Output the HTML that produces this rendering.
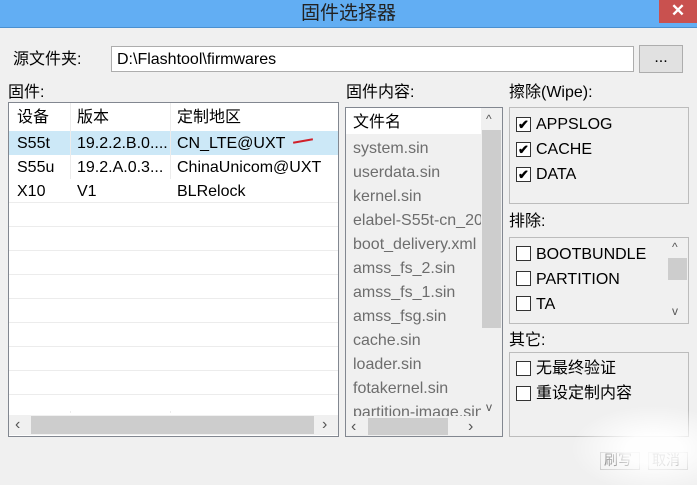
<!DOCTYPE html><html><head><meta charset="utf-8"><style>
*{box-sizing:border-box;margin:0;padding:0}
body{width:697px;height:476px;background:#f0f0f0;font-family:"Liberation Sans","Noto Sans CJK SC",sans-serif;font-size:16px;line-height:19px;color:#000;position:relative;overflow:hidden}
.a{position:absolute}
.title{left:0;top:0;width:697px;height:28px;background:#62aef3;border-bottom:1px solid #4a90d0}
.title span{position:absolute;left:0;width:697px;text-align:center;top:3px;font-size:19px;line-height:22px;color:#222}
.close{left:659px;top:0;width:38px;height:23px;background:#c9514f;color:#fff;text-align:center;font-size:17px;line-height:22px;font-weight:bold}
.box{border:1px solid #adadad;background:#fff}
.cell{position:absolute;white-space:nowrap}
.gray{color:#6d6d6d}
.cb{position:absolute;width:15px;height:15px;border:1px solid #333;background:#fff;font-size:13px;line-height:13px;text-align:center;font-weight:bold}
.sb{background:#cdcdcd}
</style></head><body>
<div class="a title"><span>固件选择器</span></div>
<div class="a close">✕</div>
<div class="a" style="left:13px;top:50px">源文件夹:</div>
<div class="a box" style="left:111px;top:46px;width:523px;height:26px;padding:3px 5px">D:\Flashtool\firmwares</div>
<div class="a" style="left:639px;top:45px;width:44px;height:28px;border:1px solid #adadad;background:#e1e1e1;text-align:center;line-height:24px">...</div>

<div class="a" style="left:8px;top:83px">固件:</div>
<div class="a box" style="left:8px;top:102px;width:331px;height:335px;border-color:#828790">
 <div class="a" style="left:0;top:28px;width:329px;height:24px;background:#cce8f7"></div>
 <div class="a" style="left:61px;top:0;width:1px;height:310px;background:#ececec"></div>
 <div class="a" style="left:161px;top:0;width:1px;height:310px;background:#ececec"></div>
 <div class="a" style="left:0;top:76px;width:329px;height:232px;background:repeating-linear-gradient(#fff 0 23px,#ececec 23px 24px)"></div>
 <div class="cell" style="left:8px;top:5px">设备</div><div class="cell" style="left:68px;top:5px">版本</div><div class="cell" style="left:168px;top:5px">定制地区</div>
 <div class="cell" style="left:8px;top:31px">S55t</div><div class="cell" style="left:68px;top:31px">19.2.2.B.0....</div><div class="cell" style="left:168px;top:31px">CN_LTE@UXT</div>
 <div class="a" style="left:284px;top:37px;width:20px;height:2px;background:#d0202a;transform:rotate(-10deg)"></div>
 <div class="cell" style="left:8px;top:55px">S55u</div><div class="cell" style="left:68px;top:55px">19.2.A.0.3...</div><div class="cell" style="left:168px;top:55px">ChinaUnicom@UXT</div>
 <div class="cell" style="left:8px;top:79px">X10</div><div class="cell" style="left:68px;top:79px">V1</div><div class="cell" style="left:168px;top:79px">BLRelock</div>
 <div class="a" style="left:0;top:312px;width:329px;height:20px;background:#f0f0f0"></div>
 <div class="a sb" style="left:22px;top:313px;width:283px;height:18px"></div>
 <div class="cell" style="left:6px;top:312px;color:#555">‹</div><div class="cell" style="left:313px;top:312px;color:#555">›</div>
</div>

<div class="a" style="left:346px;top:83px">固件内容:</div>
<div class="a" style="left:345px;top:107px;width:158px;height:330px;border:1px solid #828790;background:#f0f0f0;overflow:hidden">
 <div class="a" style="left:0;top:0;width:135px;height:26px;background:#fff"></div>
 <div class="cell" style="left:7px;top:5px">文件名</div>
 <div class="a gray" style="left:7px;top:29px;line-height:24px;white-space:nowrap;width:128px;overflow:hidden">system.sin<br>userdata.sin<br>kernel.sin<br>elabel-S55t-cn_20<br>boot_delivery.xml<br>amss_fs_2.sin<br>amss_fs_1.sin<br>amss_fsg.sin<br>cache.sin<br>loader.sin<br>fotakernel.sin<br>partition-image.sin</div>
 <div class="a" style="left:135px;top:0;width:21px;height:308px;background:#f0f0f0"></div>
 <div class="a sb" style="left:136px;top:22px;width:19px;height:198px"></div>
 <div class="cell" style="left:140px;top:2px;font-size:12px;color:#555">^</div>
 <div class="cell" style="left:140px;top:290px;font-size:12px;color:#555">v</div>
 <div class="a" style="left:0;top:308px;width:156px;height:20px;background:#f0f0f0"></div>
 <div class="a sb" style="left:22px;top:310px;width:80px;height:17px"></div>
 <div class="cell" style="left:5px;top:309px;color:#555">‹</div><div class="cell" style="left:122px;top:309px;color:#555">›</div>
</div>

<div class="a" style="left:509px;top:83px">擦除(Wipe):</div>
<div class="a" style="left:509px;top:107px;width:180px;height:97px;border:1px solid #bcbcbc"></div>
<div class="cb" style="left:516px;top:117px">✔</div><div class="cell" style="left:536px;top:115px">APPSLOG</div>
<div class="cb" style="left:516px;top:142px">✔</div><div class="cell" style="left:536px;top:140px">CACHE</div>
<div class="cb" style="left:516px;top:167px">✔</div><div class="cell" style="left:536px;top:165px">DATA</div>

<div class="a" style="left:509px;top:212px">排除:</div>
<div class="a" style="left:509px;top:237px;width:180px;height:87px;border:1px solid #bcbcbc;overflow:hidden">
 <div class="a sb" style="left:158px;top:20px;width:19px;height:22px"></div>
 <div class="cell" style="left:162px;top:0px;font-size:12px;color:#555">^</div>
 <div class="cell" style="left:162px;top:64px;font-size:12px;color:#555">v</div>
</div>
<div class="cb" style="left:516px;top:246px"></div><div class="cell" style="left:536px;top:245px">BOOTBUNDLE</div>
<div class="cb" style="left:516px;top:271px"></div><div class="cell" style="left:536px;top:270px">PARTITION</div>
<div class="cb" style="left:516px;top:296px"></div><div class="cell" style="left:536px;top:295px">TA</div>

<div class="a" style="left:509px;top:331px">其它:</div>
<div class="a" style="left:509px;top:352px;width:180px;height:85px;border:1px solid #bcbcbc"></div>
<div class="cb" style="left:516px;top:361px"></div><div class="cell" style="left:536px;top:359px">无最终验证</div>
<div class="cb" style="left:516px;top:386px"></div><div class="cell" style="left:536px;top:384px">重设定制内容</div>
<div class="a" style="left:600px;top:452px;width:40px;height:18px;border:1px solid #bbb;background:#eee"></div>
<div class="a" style="left:648px;top:452px;width:40px;height:18px;border:1px solid #bbb;background:#eee"></div>
<div class="a" style="left:604px;top:451px;font-size:14px;color:#333">刷写</div>
<div class="a" style="left:652px;top:451px;font-size:14px;color:#333">取消</div>
<div class="a" style="left:570px;top:405px;width:140px;height:80px;background:radial-gradient(ellipse at 60% 55%,rgba(255,255,255,.9) 25%,rgba(255,255,255,0) 70%)"></div>
</body></html>
